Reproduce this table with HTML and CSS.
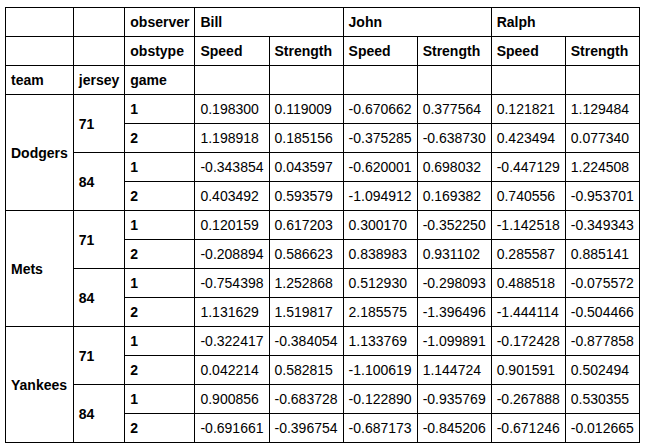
FILE: index.html
```html
<!DOCTYPE html>
<html>
<head>
<meta charset="utf-8">
<link rel="stylesheet" href="styles.css">
</head>
<body>
<table class="df">
<thead>
<tr><th></th><th></th><th>observer</th><th colspan="2">Bill</th><th colspan="2">John</th><th colspan="2">Ralph</th></tr>
<tr><th></th><th></th><th>obstype</th><th>Speed</th><th>Strength</th><th>Speed</th><th>Strength</th><th>Speed</th><th>Strength</th></tr>
<tr><th>team</th><th>jersey</th><th>game</th><th></th><th></th><th></th><th></th><th></th><th></th></tr>
</thead>
<tbody>
<tr><th rowspan="4">Dodgers</th><th rowspan="2">71</th><th>1</th><td>0.198300</td><td>0.119009</td><td>-0.670662</td><td>0.377564</td><td>0.121821</td><td>1.129484</td></tr>
<tr><th>2</th><td>1.198918</td><td>0.185156</td><td>-0.375285</td><td>-0.638730</td><td>0.423494</td><td>0.077340</td></tr>
<tr><th rowspan="2">84</th><th>1</th><td>-0.343854</td><td>0.043597</td><td>-0.620001</td><td>0.698032</td><td>-0.447129</td><td>1.224508</td></tr>
<tr><th>2</th><td>0.403492</td><td>0.593579</td><td>-1.094912</td><td>0.169382</td><td>0.740556</td><td>-0.953701</td></tr>
<tr><th rowspan="4">Mets</th><th rowspan="2">71</th><th>1</th><td>0.120159</td><td>0.617203</td><td>0.300170</td><td>-0.352250</td><td>-1.142518</td><td>-0.349343</td></tr>
<tr><th>2</th><td>-0.208894</td><td>0.586623</td><td>0.838983</td><td>0.931102</td><td>0.285587</td><td>0.885141</td></tr>
<tr><th rowspan="2">84</th><th>1</th><td>-0.754398</td><td>1.252868</td><td>0.512930</td><td>-0.298093</td><td>0.488518</td><td>-0.075572</td></tr>
<tr><th>2</th><td>1.131629</td><td>1.519817</td><td>2.185575</td><td>-1.396496</td><td>-1.444114</td><td>-0.504466</td></tr>
<tr><th rowspan="4">Yankees</th><th rowspan="2">71</th><th>1</th><td>-0.322417</td><td>-0.384054</td><td>1.133769</td><td>-1.099891</td><td>-0.172428</td><td>-0.877858</td></tr>
<tr><th>2</th><td>0.042214</td><td>0.582815</td><td>-1.100619</td><td>1.144724</td><td>0.901591</td><td>0.502494</td></tr>
<tr><th rowspan="2">84</th><th>1</th><td>0.900856</td><td>-0.683728</td><td>-0.122890</td><td>-0.935769</td><td>-0.267888</td><td>0.530355</td></tr>
<tr><th>2</th><td>-0.691661</td><td>-0.396754</td><td>-0.687173</td><td>-0.845206</td><td>-0.671246</td><td>-0.012665</td></tr>
</tbody>
</table>
</body>
</html>
```
FILE: styles.css
```css
html, body {
  margin: 0;
  background: #fff;
}
body {
  padding: 7px 0 0 5px;
  font-family: "Liberation Sans", Arial, sans-serif;
  font-size: 14px;
  color: #000;
}
.df {
  border-collapse: collapse;
}
.df th, .df td {
  border: 1px solid #000;
  padding: 6px 5px;
  line-height: 16px;
  height: 16px;
  text-align: left;
  vertical-align: middle;
  white-space: nowrap;
}
.df th {
  font-weight: bold;
}
.df td {
  font-weight: normal;
}
```
